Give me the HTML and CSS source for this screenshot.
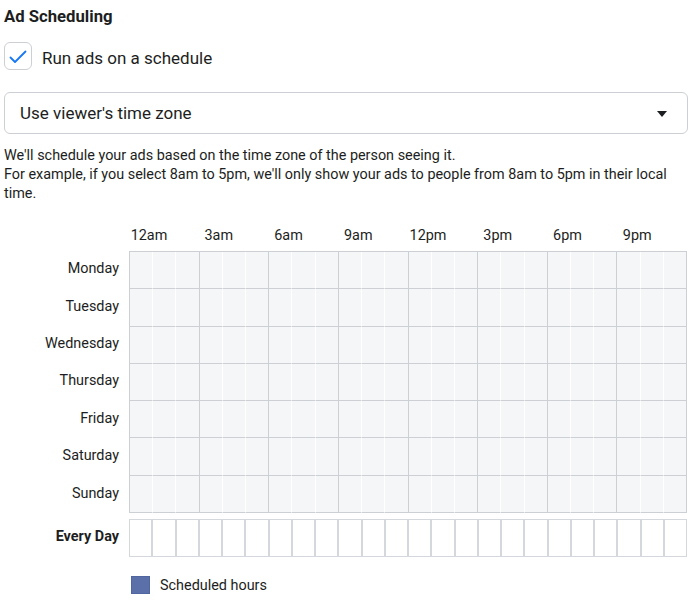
FILE: index.html
```html
<!DOCTYPE html>
<html>
<head>
<meta charset="utf-8">
<link rel="stylesheet" href="styles.css">
</head>
<body>
<div class="page">
  <h2 class="title">Ad Scheduling</h2>
  <label class="check-row">
    <span class="checkbox">
      <svg width="18" height="14" viewBox="0 0 18 14"><path d="M1.5 7.5 L6 12 L16.5 1.5" fill="none" stroke="#1877f2" stroke-width="1.8" stroke-linecap="round" stroke-linejoin="round"/></svg>
    </span>
    <span class="check-text">Run ads on a schedule</span>
  </label>
  <div class="select">
    <span>Use viewer's time zone</span>
    <span class="caret"></span>
  </div>
  <p class="desc">We'll schedule your ads based on the time zone of the person seeing it.<br>For example, if you select 8am to 5pm, we'll only show your ads to people from 8am to 5pm in their local time.</p>

  <div class="sched">
    <div class="row hours-row">
      <div class="lab"></div>
      <div class="hours">
        <span>12am</span><span>3am</span><span>6am</span><span>9am</span><span>12pm</span><span>3pm</span><span>6pm</span><span>9pm</span>
      </div>
    </div>
    <div class="row days-row">
      <div class="lab days">
        <span>Monday</span><span>Tuesday</span><span>Wednesday</span><span>Thursday</span><span>Friday</span><span>Saturday</span><span>Sunday</span>
      </div>
      <div class="board">
        <i></i><i></i><i></i><i></i><i></i><i></i><i></i><i></i><i></i><i></i><i></i><i></i><i></i><i></i><i></i><i></i><i></i><i></i><i></i><i></i><i></i><i></i><i></i><i></i>
        <i></i><i></i><i></i><i></i><i></i><i></i><i></i><i></i><i></i><i></i><i></i><i></i><i></i><i></i><i></i><i></i><i></i><i></i><i></i><i></i><i></i><i></i><i></i><i></i>
        <i></i><i></i><i></i><i></i><i></i><i></i><i></i><i></i><i></i><i></i><i></i><i></i><i></i><i></i><i></i><i></i><i></i><i></i><i></i><i></i><i></i><i></i><i></i><i></i>
        <i></i><i></i><i></i><i></i><i></i><i></i><i></i><i></i><i></i><i></i><i></i><i></i><i></i><i></i><i></i><i></i><i></i><i></i><i></i><i></i><i></i><i></i><i></i><i></i>
        <i></i><i></i><i></i><i></i><i></i><i></i><i></i><i></i><i></i><i></i><i></i><i></i><i></i><i></i><i></i><i></i><i></i><i></i><i></i><i></i><i></i><i></i><i></i><i></i>
        <i></i><i></i><i></i><i></i><i></i><i></i><i></i><i></i><i></i><i></i><i></i><i></i><i></i><i></i><i></i><i></i><i></i><i></i><i></i><i></i><i></i><i></i><i></i><i></i>
        <i></i><i></i><i></i><i></i><i></i><i></i><i></i><i></i><i></i><i></i><i></i><i></i><i></i><i></i><i></i><i></i><i></i><i></i><i></i><i></i><i></i><i></i><i></i><i></i>
      </div>
    </div>
    <div class="row every-row">
      <div class="lab every">Every Day</div>
      <div class="everyday">
        <i></i><i></i><i></i><i></i><i></i><i></i><i></i><i></i><i></i><i></i><i></i><i></i><i></i><i></i><i></i><i></i><i></i><i></i><i></i><i></i><i></i><i></i><i></i><i></i>
      </div>
    </div>
    <div class="row legend-row">
      <div class="lab"></div>
      <div class="legend"><span class="swatch"></span><span>Scheduled hours</span></div>
    </div>
  </div>
</div>
</body>
</html>
```
FILE: styles.css
```css
* { box-sizing: border-box; }
body {
  margin: 0;
  background: #fff;
  color: #1c1e21;
  font-family: Roboto, "Liberation Sans", Arial, sans-serif;
}
.page {
  padding: 7px 12px 0 4px;
  width: 700px;
}
.title {
  margin: 0;
  font-size: 16.7px;
  font-weight: 700;
  line-height: 20px;
}
.check-row {
  display: flex;
  align-items: center;
  margin-top: 15px;
  height: 28px;
}
.checkbox {
  width: 28px;
  height: 28px;
  border: 1px solid #ccd0d5;
  border-radius: 6px;
  display: flex;
  align-items: center;
  justify-content: center;
}
.checkbox svg { margin-top: 1px; }
.check-text {
  margin-left: 10px;
  font-size: 17px;
  padding-top: 3px;
}
.select {
  margin-top: 22px;
  height: 42px;
  width: 684px;
  border: 1px solid #ccd0d5;
  border-radius: 6px;
  display: flex;
  align-items: center;
  justify-content: space-between;
  padding: 0 20px 0 15px;
  font-size: 17px;
}
.caret {
  width: 0;
  height: 0;
  border-left: 5.5px solid transparent;
  border-right: 5.5px solid transparent;
  border-top: 6px solid #1c1e21;
  margin-top: 1px;
}
.desc {
  margin: 12px 0 0;
  font-size: 14.4px;
  line-height: 19px;
}
.sched {
  margin-top: 23px;
}
.row {
  display: flex;
}
.lab {
  width: 125px;
  flex: none;
  padding-right: 10px;
  text-align: right;
  font-size: 14.4px;
}
.hours {
  width: 558px;
  display: grid;
  grid-template-columns: repeat(8, 1fr);
  height: 25px;
  font-size: 14.4px;
}
.hours span {
  width: 40px;
  text-align: center;
  line-height: 20px;
}
.days {
  display: grid;
  grid-template-rows: repeat(7, 1fr);
  height: 262px;
}
.days span {
  display: flex;
  align-items: center;
  justify-content: flex-end;
  padding-bottom: 2px;
}
.board {
  width: 558px;
  height: 262px;
  display: grid;
  grid-template-columns: repeat(24, 1fr);
  grid-template-rows: repeat(7, 1fr);
  border-top: 1px solid #ccd0d5;
  border-left: 1px solid #ccd0d5;
}
.board i {
  background: #f5f6f7;
  border-right: 1px solid #fff;
  border-bottom: 1px solid #ccd0d5;
}
.board i:nth-child(3n) {
  border-right-color: #ccd0d5;
}
.every-row {
  margin-top: 6px;
}
.every {
  font-weight: 700;
  display: flex;
  align-items: center;
  justify-content: flex-end;
  height: 38px;
  padding-bottom: 4px;
}
.everyday {
  width: 558px;
  height: 38px;
  display: grid;
  grid-template-columns: repeat(24, 1fr);
}
.everyday i {
  border: 1px solid #d4d7dc;
  background: #fff;
}
.legend-row {
  margin-top: 19px;
}
.legend {
  display: flex;
  align-items: center;
  font-size: 14.4px;
  padding-left: 2px;
}
.swatch {
  width: 19px;
  height: 18px;
  background: #5b70a8;
  border: 1px solid #4f66a0;
  margin-right: 10px;
}
```
